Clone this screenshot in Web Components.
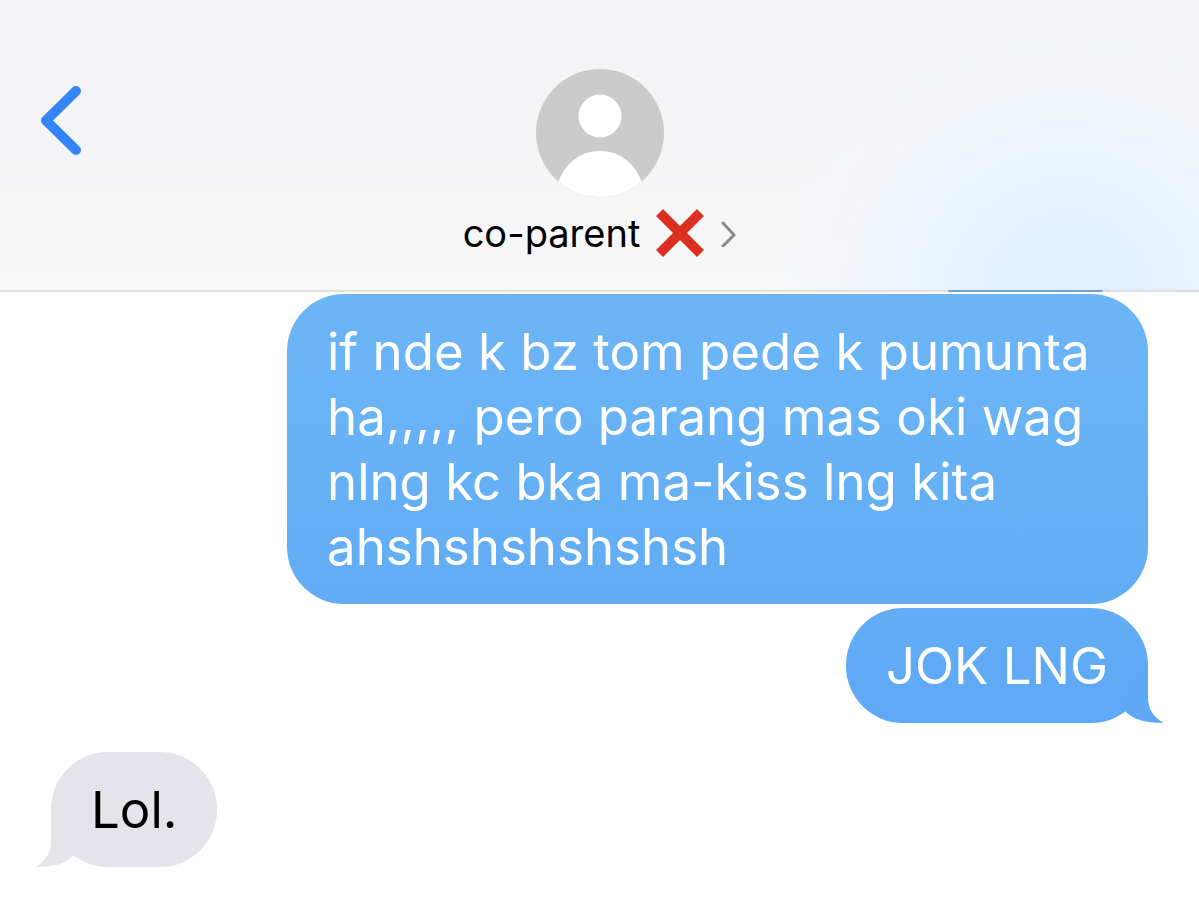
<!DOCTYPE html>
<html lang="tl">
<head>
<meta charset="utf-8">
<meta name="viewport" content="width=device-width, initial-scale=1">
<title>Messages</title>
<style>
  html, body { margin: 0; min-height: 100%; background: #fff; }
  body { font-family: Inter, "Liberation Sans", sans-serif; color: #000; }
</style>
</head>
<body>
<chat-screen>
  <chat-header slot="header">co-parent</chat-header>
  <chat-bubble side="sent" style="--from:#6cb6f7;--to:#62acf5">if nde k bz tom pede k pumunta ha,,,,, pero parang mas oki wag nlng kc bka ma-kiss lng kita ahshshshshshsh</chat-bubble>
  <chat-bubble side="sent" tail style="--from:#62adf5;--to:#5ea8f5">JOK LNG</chat-bubble>
  <chat-bubble side="received" tail>Lol.</chat-bubble>
</chat-screen>

<template id="screen-template">
  <style>
    :host { display: flex; flex-direction: column; min-height: 100vh; }
    main { display: flex; flex-direction: column; gap: 4px; padding: 2px 51px 40px; }
  </style>
  <slot name="header"></slot>
  <main><slot></slot></main>
</template>

<template id="header-template">
  <style>
    :host {
      display: block;
      position: relative;
      border-bottom: 2px solid #dfe0e3;
      background:
        radial-gradient(ellipse 290px 270px at 89% 100%, #dff1fe 0%, #e3f2fd 30%, #edf4fc 56%, #f3f7fa 78%, #f5f7f900 100%),
        linear-gradient(#f3f3f5, #f5f5f7 50%, #f8f8f9);
      background-clip: padding-box;
    }
    /* Bottom edge of the message scrolled beneath the bar */
    :host::after {
      content: "";
      position: absolute;
      right: 8%;
      bottom: -2px;
      width: 155px;
      height: 2px;
      border-radius: 0 0 8px 8px;
      background: #759fc0;
    }
    header { display: grid; grid-template-columns: 1fr auto 1fr; padding: 69px 35px 33px 36px; }
    button { border: 0; margin: 0; padding: 0; background: none; font: inherit; color: inherit; cursor: pointer; }
    .back { justify-self: start; align-self: start; margin-top: 16px; }
    .contact { display: flex; flex-direction: column; align-items: center; gap: 12px; }
    .name { display: flex; align-items: center; height: 48px; font-size: 38px; line-height: 48px; }
    .cross, .more { margin-left: 16px; }
    svg { display: block; }
  </style>
  <header>
    <button class="back" type="button" aria-label="Back">
      <svg width="50" height="72" viewBox="0 0 50 72" fill="none" stroke="#3485f7" stroke-width="10" stroke-linecap="round" stroke-linejoin="round"><path d="M40 6 10 35.500 40 65"/></svg>
    </button>
    <button class="contact" type="button">
      <svg width="128" height="128" viewBox="0 0 128 128" aria-hidden="true">
        <clipPath id="disc"><circle cx="64" cy="64" r="64"/></clipPath>
        <circle cx="64" cy="64" r="64" fill="#cbcbcb"/>
        <g fill="#fff" clip-path="url(#disc)"><circle cx="64" cy="47" r="21.500"/><path d="M22 114C28 95 44 82 64 82S100 95 106 114L100 128H28Z"/></g>
      </svg>
      <span class="name">
        <slot></slot>
        <svg class="cross" width="48" height="48" viewBox="0 0 48 48" role="img" aria-label="cross mark"><path fill="#dc3023" d="M0 7 7 0 24 17 41 0 48 7 31 24 48 41 41 48 24 31 7 48 0 41 17 24Z"/></svg>
        <svg class="more" width="17" height="28" viewBox="0 0 17 28" fill="none" stroke="#8b8b8f" stroke-width="3" stroke-linecap="round" stroke-linejoin="round" aria-hidden="true"><path d="M3 4 14 16 3 27"/></svg>
      </span>
    </button>
  </header>
</template>

<template id="bubble-template">
  <style>
    :host {
      display: block;
      position: relative;
      box-sizing: border-box;
      width: fit-content;
      max-width: calc(100% - 236px);
      padding: 25px 40px;
      border-radius: 57px;
    }
    :host([side="sent"]) { align-self: flex-end; color: #fff; background: linear-gradient(var(--from), var(--to)); }
    :host([side="received"]) { --to: #e5e4ea; align-self: flex-start; margin-top: 25px; background: var(--to); }
    p { margin: 0; font-size: 51px; line-height: 65px; }
    svg { display: none; position: absolute; bottom: 0; right: -16px; fill: var(--to); }
    :host([tail]) svg { display: block; }
    :host([side="received"]) svg { right: auto; left: -16px; transform: scaleX(-1); }
  </style>
  <svg width="56" height="60" viewBox="0 0 56 60" aria-hidden="true"><path d="M40 0V35C40 46 46 55 56 60C39 60 25 57 17 48L4 40 36 0Z"/></svg>
  <p><slot></slot></p>
</template>

<script>
  const define = (tag, templateId) => customElements.define(tag, class extends HTMLElement {
    constructor() {
      super();
      this.attachShadow({ mode: "open" })
        .append(document.getElementById(templateId).content.cloneNode(true));
    }
  });
  define("chat-screen", "screen-template");
  define("chat-header", "header-template");
  define("chat-bubble", "bubble-template");
</script>
</body>
</html>
